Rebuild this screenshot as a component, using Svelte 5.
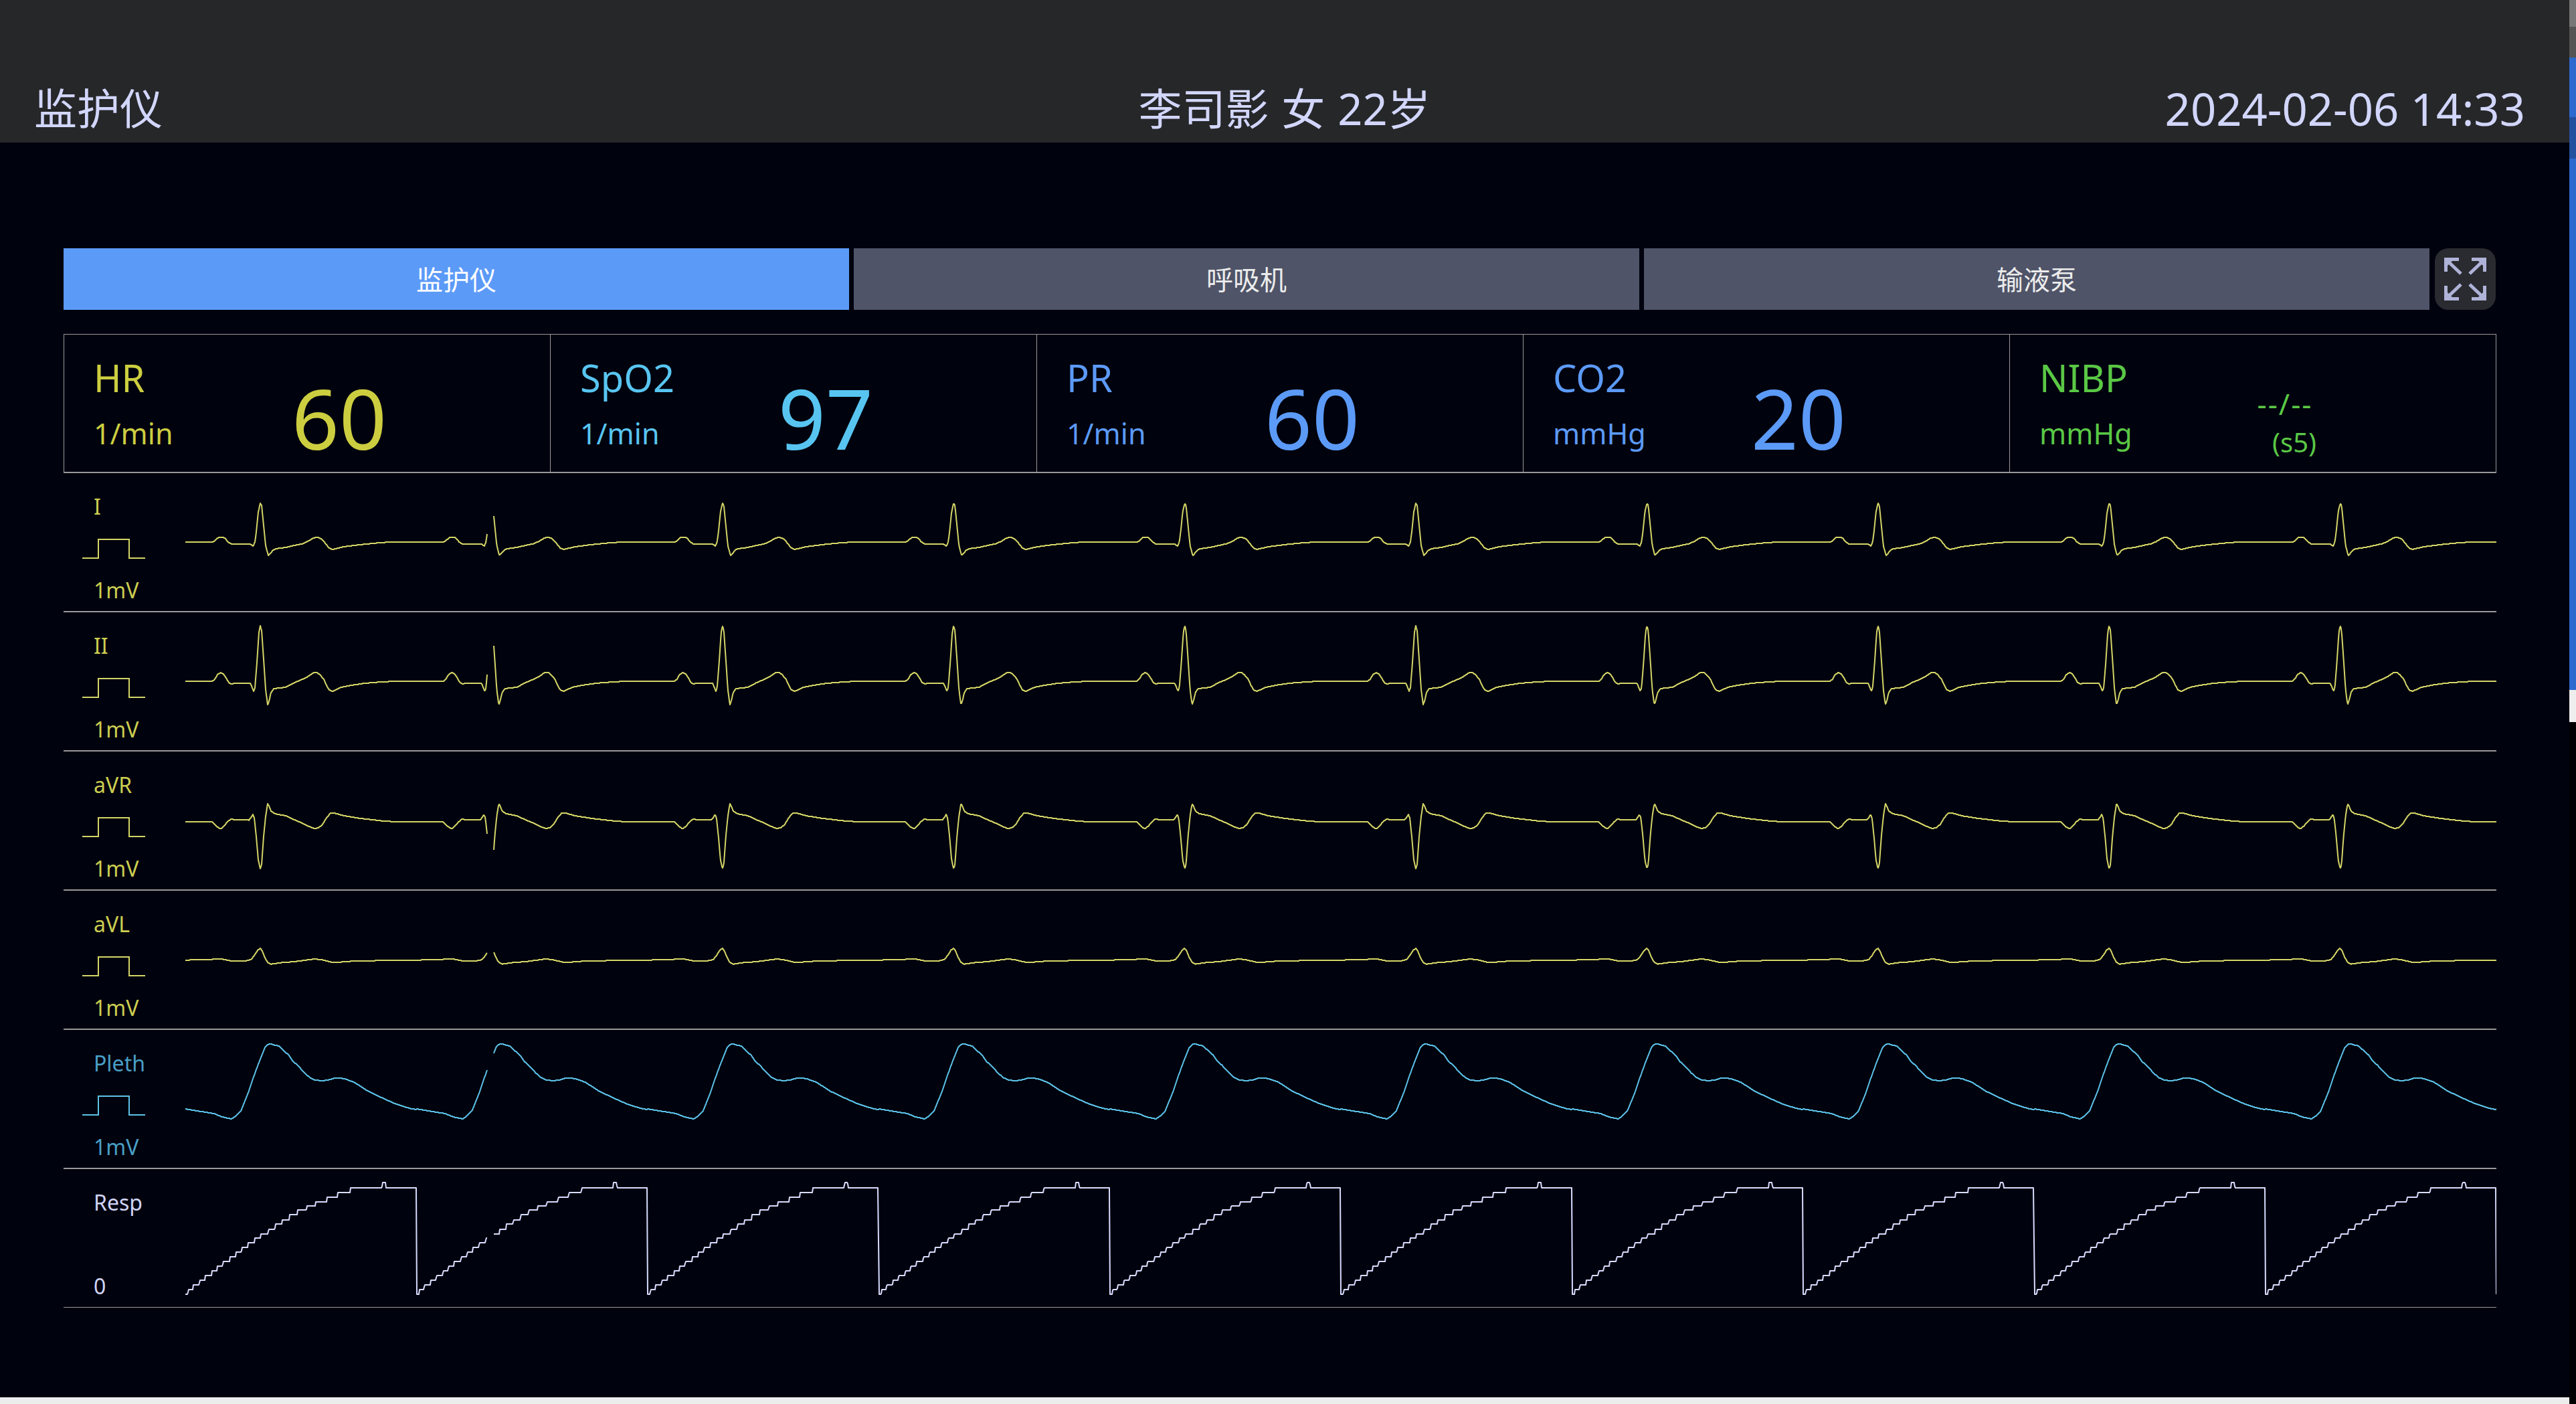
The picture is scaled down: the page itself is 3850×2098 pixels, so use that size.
<script>
  const PERIOD = 345.4;
  const LEFT = 277;
  const RIGHT = 3731;

  // one beat, in screen px of the first period
  const leadI = [[277,810],[317,810],[320,809],[323,806],[326,803.5],[330,802.5],[334,803],[337,805],[341,810],[346,813],[360,813],[370,812.5],[374,813],[378.5,816],[381,810],[383,795],[386,765],[389,752],[391,755],[394,785],[397,815],[401,830],[404,827],[408,822],[412,820],[427,818],[440,815],[452,812.5],[460,809],[468,804],[474,802.7],[480,805],[484,809],[488,814],[492,819],[497,821],[514,817],[539,813.8],[570,810.7],[590,810],[622.4,810]];
  const leadII = [[277,1018],[317,1018],[321,1015],[325,1008],[330,1005],[334,1007],[338,1013],[342,1020],[346,1022],[350,1021],[374,1021],[376,1025],[379,1033],[381,1028],[384,990],[387,945],[389,935],[391,942],[394,985],[397,1030],[400,1053],[402,1048],[405,1035],[409,1029],[427,1027],[440,1020],[452,1015],[460,1011],[468,1005.5],[474,1005],[478,1008],[484,1015],[488,1024],[492,1031],[497,1033],[510,1027],[525,1024],[545,1021],[570,1019],[590,1018],[622.4,1018]];
  const aVR = [[277,1228],[317,1228],[320,1231],[324,1235],[328,1237.5],[331,1237.5],[335,1234],[340,1228],[345,1224],[352,1225],[372,1225.5],[375,1222],[378,1217],[380,1222],[383,1250],[386,1285],[389,1298],[391,1292],[394,1250],[397,1220],[400,1201],[402,1204],[405,1212],[411,1216],[427,1219],[440,1225],[452,1230],[462,1235],[470,1238],[476,1237],[482,1232],[488,1222],[494,1215],[500,1215],[514,1219],[539,1223],[570,1226.5],[590,1228],[622.4,1228]];
  const aVL = [[277,1434.7],[317,1433.5],[330,1432.7],[345,1435.7],[368,1435.5],[375,1434],[380,1428],[385,1420],[389,1417],[392,1421],[396,1431],[400,1438],[405,1440.7],[420,1438.5],[440,1437],[470,1433],[480,1434],[497,1438],[510,1437.5],[530,1436],[590,1435],[622.4,1434.7]];
  const pleth = [[277,1657],[298,1660.5],[320,1664],[332,1669],[346,1672],[352,1668],[360,1660],[366,1645],[371,1633],[378,1612],[386,1590],[396,1565],[400,1561],[404,1559.5],[410,1561.5],[416.7,1563],[424,1570],[432,1577],[438,1586],[445,1592],[455,1603],[462.7,1610],[470,1613.5],[480,1615],[490,1614],[500,1611],[506,1610.7],[515,1612],[529,1617],[540,1624],[549,1630],[570,1640],[590,1649],[605,1654],[615.7,1657],[622.4,1658]];

  const stairX = [277,281.5,289,298.5,307,317,325,333.5,344,353,361.6,371,381,390,401.4,411.6,422,433,445,458.6,472,489,505,524];
  const stairY = [1934,1927,1920,1913,1906,1899,1892,1885,1878,1871,1864,1857,1850,1844,1837,1829,1823,1815,1808,1802,1796,1789,1782,1775];
  const resp = [];
  stairX.forEach((x, i) => {
    if (i > 0) resp.push([x - 0.8, stairY[i - 1]]);
    resp.push([x, stairY[i]]);
  });
  resp.push([570.8,1775],[571.6,1767],[576,1767],[577,1775],[622,1775],[622.4,1934]);

  function valueAt(points, phase) {
    for (let i = 1; i < points.length; i++) {
      if (phase <= points[i][0]) {
        const [x0, y0] = points[i - 1];
        const [x1, y1] = points[i];
        return y0 + ((y1 - y0) * (phase - x0)) / (x1 - x0);
      }
    }
    return points[points.length - 1][1];
  }

  // the trace has a break just after the first period's R wave
  function trace(points, top) {
    let d = "";
    let pen = false;
    for (let x = LEFT; x <= RIGHT; x += 1) {
      if (x > 728 && x < 738) {
        pen = false;
        continue;
      }
      const phase = LEFT + ((x - LEFT) % PERIOD);
      const y = Math.round(valueAt(points, phase)) - top;
      d += `${pen ? "L" : "M"}${x - LEFT} ${y}`;
      pen = true;
    }
    return d;
  }

  const metrics = [
    { name: "HR", unit: "1/min", value: "60", color: "#ccce40" },
    { name: "SpO2", unit: "1/min", value: "97", color: "#58c5f1" },
    { name: "PR", unit: "1/min", value: "60", color: "#5c9af7" },
    { name: "CO2", unit: "mmHg", value: "20", color: "#5c9af7" }
  ];

  const waves = [
    { label: "I", points: leadI, top: 707, color: "#d4d566", text: "#ccce50", foot: "1mV", pulse: true },
    { label: "II", points: leadII, top: 915, color: "#d4d566", text: "#ccce50", foot: "1mV", pulse: true },
    { label: "aVR", points: aVR, top: 1123, color: "#d4d566", text: "#ccce50", foot: "1mV", pulse: true },
    { label: "aVL", points: aVL, top: 1331, color: "#d4d566", text: "#ccce50", foot: "1mV", pulse: true },
    { label: "Pleth", points: pleth, top: 1539, color: "#5cc2e8", text: "#4a9fc6", foot: "1mV", pulse: true },
    { label: "Resp", points: resp, top: 1747, color: "#d8dcff", text: "#d0d4f6", foot: "0", pulse: false }
  ];

  const tabs = ["监护仪", "呼吸机", "输液泵"];
</script>

<div class="screen">
  <div class="main">
    <header class="top">
      <span class="title">监护仪</span>
      <span class="patient">李司影 女 22岁</span>
      <span class="clock">2024-02-06 14:33</span>
    </header>

    <div class="content">
      <div class="tabs">
        {#each tabs as tab, i}
          <div class="tab" class:active={i === 0}>{tab}</div>
        {/each}
        <div class="expand">
          <svg width="91" height="92" viewBox="0 0 91 92">
            <g fill="none" stroke="#b0b3d8" stroke-width="5">
              <path d="M16.5 35V16.5H36 M18 18L39 38" />
              <path d="M74.5 35V16.5H55 M73 18L52 38" />
              <path d="M16.5 56V75.5H36 M18 74L39 54" />
              <path d="M74.5 56V75.5H55 M73 74L52 54" />
            </g>
            <g fill="#b0b3d8">
              <path d="M16 16H29L16 29Z" />
              <path d="M75 16H62L75 29Z" />
              <path d="M16 76H29L16 63Z" />
              <path d="M75 76H62L75 63Z" />
            </g>
          </svg>
        </div>
      </div>

      <div class="metrics">
        {#each metrics as m}
          <div class="metric" style="color: {m.color}">
            <div class="labels">
              <div class="name">{m.name}</div>
              <div class="unit">{m.unit}</div>
            </div>
            <div class="value">{m.value}</div>
          </div>
        {/each}
        <div class="metric" style="color: #5ac845">
          <div class="labels">
            <div class="name">NIBP</div>
            <div class="unit">mmHg</div>
          </div>
          <div class="pressure">
            <div class="reading">--/--</div>
            <div class="cycle">(s5)</div>
          </div>
        </div>
      </div>

      <div class="waves">
        {#each waves as w}
          <div class="wave">
            <div class="side" style="color: {w.text}">
              <div class="lead">{w.label}</div>
              <div class="pulse">
                {#if w.pulse}
                  <svg width="94" height="30" viewBox="0 0 94 30">
                    <path d="M0 29H24V1H70V29H94" fill="none" stroke={w.color} stroke-width="2" />
                  </svg>
                {/if}
              </div>
              <div class="foot">{w.foot}</div>
            </div>
            <svg class="trace" width="3454" height="207" viewBox="0 0 3454 207">
              <path d={trace(w.points, w.top)} fill="none" stroke={w.color} stroke-width="2" stroke-linejoin="round" />
            </svg>
          </div>
        {/each}
      </div>
    </div>

    <div class="strip"></div>
  </div>

  <div class="edge">
    <div class="e1"></div>
    <div class="e2"></div>
    <div class="e3"></div>
    <div class="e4"></div>
    <div class="e3 long"></div>
    <div class="e5"></div>
  </div>
</div>

<style>
  :global(body) {
    margin: 0;
    background: #000;
  }

  .screen {
    width: 3850px;
    height: 2098px;
    display: flex;
    overflow: hidden;
    font-family: "Noto Sans", "Noto Sans CJK SC", sans-serif;
  }

  .main {
    width: 3840px;
    height: 2098px;
    display: flex;
    flex-direction: column;
    background: #00020e;
  }

  .top {
    height: 213px;
    flex: none;
    box-sizing: border-box;
    padding-bottom: 9px;
    background: #262729;
    color: #d2d6fb;
    display: grid;
    grid-template-columns: 1fr auto 1fr;
    align-items: end;
    font-size: 64px;
    line-height: 84px;
  }

  .title {
    margin-left: 51px;
  }

  .patient {
    font-size: 65px;
    word-spacing: 2px;
  }

  .clock {
    justify-self: end;
    margin-right: 66px;
    font-size: 67px;
  }

  .content {
    flex: 1;
    padding: 158px 109px 0 95px;
  }

  .tabs {
    display: flex;
    gap: 7px;
    height: 92px;
  }

  .tab {
    width: 1174px;
    box-sizing: border-box;
    padding-bottom: 3px;
    background: #4f5468;
    color: #ececec;
    font-size: 40px;
    display: flex;
    align-items: center;
    justify-content: center;
  }

  .tab.active {
    background: #5c9af7;
    color: #fff;
  }

  .expand {
    width: 91px;
    margin-left: 1px;
    background: #2a2b30;
    border-radius: 20px;
  }

  .expand svg {
    display: block;
  }

  .metrics {
    margin-top: 36px;
    height: 208px;
    box-sizing: border-box;
    display: grid;
    grid-template-columns: repeat(4, 727px) 1fr;
    border: 1px solid #999;
    border-bottom-width: 2px;
  }

  .metric {
    display: grid;
    grid-template-columns: 276px 270px;
    border-left: 1px solid #999;
    margin-left: -1px;
  }

  .metric:first-child {
    border-left: none;
    margin-left: 0;
  }

  .labels {
    padding: 26px 0 0 44px;
  }

  .name {
    font-size: 56px;
    line-height: 76px;
  }

  .unit {
    font-size: 43px;
    line-height: 56px;
    margin-top: 18px;
  }

  .value {
    font-size: 124px;
    line-height: 150px;
    text-align: center;
    padding-top: 49px;
  }

  .pressure {
    font-size: 40px;
    line-height: 58px;
    text-align: center;
    padding-top: 74px;
  }

  .reading {
    font-size: 44px;
    letter-spacing: 2px;
  }

  .cycle {
    padding-left: 28px;
  }

  .wave {
    height: 208px;
    box-sizing: border-box;
    display: flex;
    border-bottom: 2px solid #999;
  }

  .wave:last-child {
    height: 207px;
    border-bottom-width: 1px;
  }

  .side {
    width: 182px;
    flex: none;
    box-sizing: border-box;
    padding: 30px 0 0 28px;
    font-size: 32px;
    line-height: 40px;
  }

  .lead,
  .foot {
    padding-left: 17px;
  }

  .pulse {
    height: 30px;
    margin: 28px 0 27px;
  }

  .pulse svg {
    display: block;
  }

  .trace {
    display: block;
    flex: none;
  }

  .strip {
    height: 10px;
    flex: none;
    background: #ececec;
  }

  .edge {
    width: 10px;
    flex: none;
    display: flex;
    flex-direction: column;
    background: #000;
  }

  .e1 {
    height: 40px;
    background: #777;
  }

  .e2 {
    height: 46px;
    background: #555;
  }

  .e3 {
    height: 89px;
    background: #2d6ad0;
  }

  .e3.long {
    height: 794px;
  }

  .e4 {
    height: 62px;
    background: #24519f;
  }

  .e5 {
    height: 48px;
    background: #eee;
  }
</style>
